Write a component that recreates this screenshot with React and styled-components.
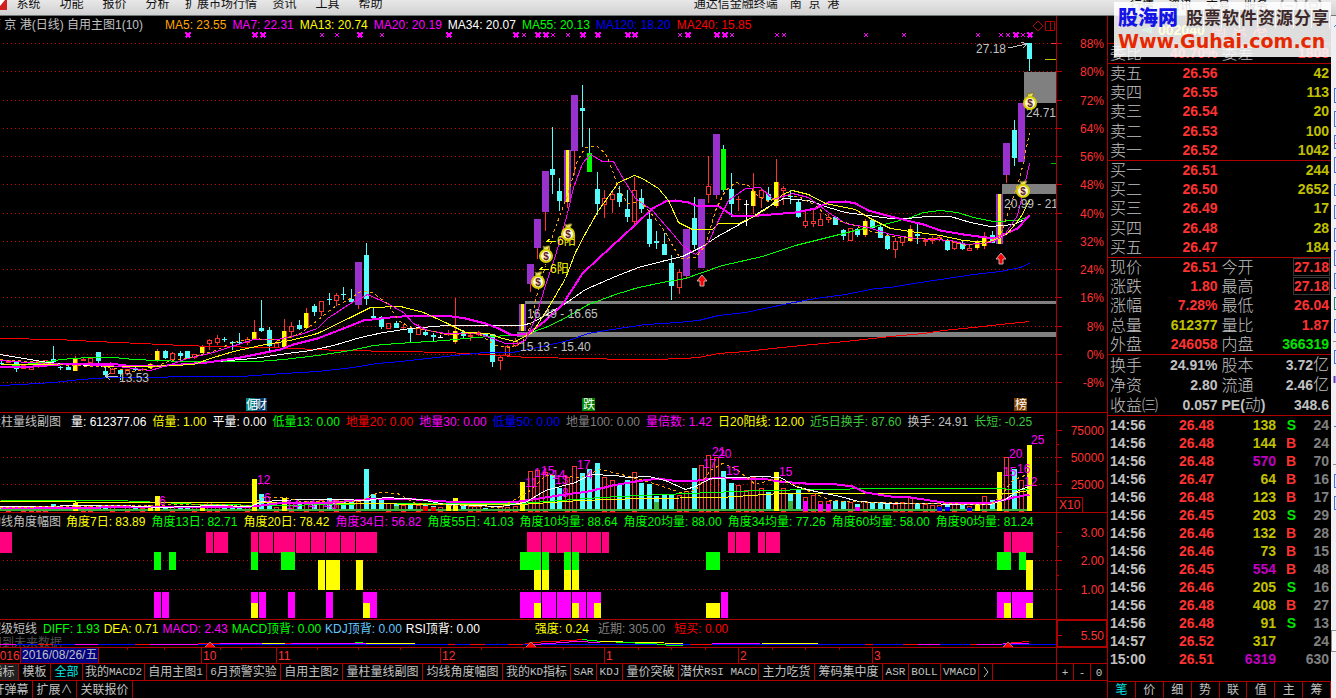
import React from "react"
import styled, { createGlobalStyle } from "styled-components"

const RED = "#b00000"
const CYAN = "#54fcfc"
const PURPLE = "#9932cc"
const PINK = "#ff007f"

/* ---------- data ---------- */

// index, kind, high, low, body top, body bottom
// kinds: r hollow red, c cyan, y yellow, p purple, q purple with yellow core, g green, w white
const candles = [
  [0, "c", 361, 365, 363, 364], [1, "r", 360, 363, 360, 363], [2, "c", 362, 372, 362, 369],
  [3, "r", 364, 369, 365, 369], [4, "r", 367, 370, 367, 370], [5, "r", 360, 368, 361, 367],
  [6, "r", 360, 365, 360, 365], [7, "c", 346, 362, 359, 362], [8, "c", 366, 370, 367, 368],
  [9, "c", 366, 370, 367, 370], [10, "y", 356, 371, 359, 371], [11, "r", 358, 361, 359, 361],
  [12, "r", 358, 363, 358, 363], [13, "c", 352, 363, 352, 361], [14, "c", 367, 378, 371, 375],
  [15, "r", 368, 374, 369, 374], [16, "c", 370, 380, 370, 374], [17, "r", 369, 374, 369, 374],
  [18, "c", 367, 371, 368, 370], [19, "r", 368, 371, 369, 370], [20, "y", 363, 368, 364, 368],
  [21, "y", 349, 362, 351, 361], [22, "c", 350, 359, 351, 358], [23, "r", 352, 360, 353, 360],
  [24, "c", 351, 360, 353, 356], [25, "c", 351, 358, 351, 358], [26, "r", 354, 359, 354, 358],
  [27, "y", 345, 353, 346, 353], [28, "r", 339, 350, 340, 344], [29, "r", 335, 345, 338, 343],
  [30, "c", 337, 342, 339, 340], [31, "c", 341, 350, 342, 343], [32, "c", 333, 344, 342, 343],
  [33, "r", 337, 345, 339, 343], [34, "y", 320, 339, 332, 339], [35, "c", 300, 332, 328, 331],
  [36, "c", 327, 353, 330, 346], [37, "r", 341, 348, 343, 348], [38, "y", 319, 347, 331, 347],
  [39, "r", 322, 338, 326, 332], [40, "c", 320, 330, 325, 329], [41, "y", 308, 329, 313, 328],
  [42, "c", 304, 316, 306, 312], [43, "r", 301, 316, 301, 312], [44, "c", 293, 305, 299, 300],
  [45, "r", 293, 306, 295, 301], [46, "c", 287, 300, 294, 295], [47, "c", 289, 303, 299, 302],
  [48, "p", 262, 309, 262, 305], [49, "c", 243, 305, 255, 299], [50, "c", 307, 318, 316, 318],
  [51, "c", 316, 329, 317, 327], [52, "r", 323, 329, 323, 329], [53, "c", 321, 328, 323, 328],
  [54, "r", 324, 330, 327, 328], [55, "c", 326, 342, 328, 333], [56, "r", 324, 335, 328, 335],
  [57, "c", 330, 336, 332, 335], [58, "c", 333, 341, 335, 337], [59, "w", 335, 338, 337, 338],
  [60, "r", 330, 336, 334, 335], [61, "y", 298, 344, 331, 342], [62, "c", 330, 338, 332, 336],
  [63, "r", 333, 341, 335, 337], [64, "r", 331, 336, 332, 335], [65, "c", 333, 337, 333, 336],
  [66, "c", 334, 367, 334, 362], [67, "r", 355, 370, 357, 361], [68, "r", 345, 357, 346, 356],
  [69, "r", 338, 347, 341, 346], [70, "q", 304, 331, 304, 331], [71, "p", 264, 292, 264, 284],
  [72, "p", 219, 259, 219, 248], [73, "p", 171, 231, 171, 212], [74, "c", 127, 194, 169, 175],
  [75, "c", 178, 211, 191, 201], [76, "q", 150, 208, 150, 202], [77, "p", 95, 175, 95, 151],
  [78, "c", 85, 147, 108, 111], [79, "g", 128, 172, 153, 172], [80, "c", 172, 215, 189, 204],
  [81, "r", 190, 218, 198, 205], [82, "r", 192, 213, 194, 200], [83, "c", 186, 207, 193, 202],
  [84, "c", 190, 222, 209, 217], [85, "r", 177, 224, 190, 222], [86, "c", 189, 213, 198, 209],
  [87, "c", 210, 247, 219, 244], [88, "c", 231, 249, 241, 243], [89, "c", 233, 255, 244, 255],
  [90, "c", 255, 300, 263, 286], [91, "r", 269, 294, 272, 288], [92, "p", 229, 279, 229, 276],
  [93, "c", 197, 249, 218, 245], [94, "p", 199, 268, 199, 268], [95, "r", 156, 203, 186, 195],
  [96, "p", 134, 199, 134, 195], [97, "g", 145, 192, 149, 190], [98, "c", 173, 217, 189, 204],
  [99, "r", 196, 211, 199, 200], [100, "w", 200, 226, 204, 205], [101, "y", 173, 214, 191, 206],
  [102, "r", 189, 208, 190, 198], [103, "c", 187, 202, 194, 200], [104, "y", 159, 208, 182, 206],
  [105, "r", 186, 205, 188, 191], [106, "c", 190, 204, 196, 197], [107, "c", 199, 218, 202, 217],
  [108, "r", 209, 228, 221, 226], [109, "r", 209, 227, 221, 224], [110, "r", 213, 226, 219, 226],
  [111, "r", 214, 223, 217, 220], [112, "c", 216, 225, 217, 225], [113, "c", 229, 240, 230, 236],
  [114, "r", 228, 241, 228, 241], [115, "c", 228, 237, 229, 235], [116, "y", 219, 237, 221, 235],
  [117, "c", 219, 229, 220, 228], [118, "c", 224, 238, 227, 238], [119, "c", 233, 250, 236, 249],
  [120, "r", 238, 258, 241, 250], [121, "r", 236, 246, 236, 243], [122, "y", 225, 242, 229, 241],
  [123, "c", 224, 244, 234, 236], [124, "r", 238, 246, 240, 242], [125, "r", 236, 244, 238, 241],
  [126, "r", 236, 241, 237, 240], [127, "c", 239, 251, 240, 250], [128, "r", 241, 250, 242, 249],
  [129, "c", 241, 250, 243, 249], [130, "r", 245, 251, 248, 251], [131, "y", 240, 250, 241, 248],
  [132, "y", 232, 249, 236, 246], [133, "c", 231, 243, 235, 243], [134, "q", 194, 244, 194, 244],
  [135, "p", 143, 183, 143, 175], [136, "c", 120, 166, 130, 158], [137, "p", 103, 162, 103, 162],
  [138, "c", 43, 71, 43, 59],
]

const averages = [
  { color: "#f00", width: 1, points: "0,338 57,339 95,341 140,343 183,345 213,346 267,347 317,349 340,350 400,351 445,352 488,354 527,357 588,358 625,359 653,359 683,358 698,357 718,353 745,351 772,348 812,344 845,341 890,336 923,333 943,330 973,327 1000,324 1029,321" },
  { color: "#00f", width: 1, points: "0,385 20,384 53,382 80,379 110,377 153,377 183,376 240,376 283,373 317,371 353,367 377,363 400,361 445,356 485,352 512,352 542,346 568,340 588,333 612,329 645,324 678,322 698,320 718,315 745,312 788,303 815,298 845,294 875,288 890,287 913,283 940,279 973,274 1000,271 1020,267 1029,263" },
  { color: "#0f0", width: 1, points: "0,367 23,364 43,362 60,359 87,357 113,357 133,359 183,361 257,361 283,359 317,355 350,350 373,345 397,343 445,340 465,338 488,336 512,335 525,334 545,327 562,319 588,304 615,294 638,287 662,282 685,278 702,272 722,265 762,256 795,245 835,235 855,230 888,223 910,217 923,212 940,210 957,212 973,217 993,221 1017,220 1029,216" },
  { color: "#fff", width: 1, points: "0,354 17,357 47,362 73,364 110,366 150,366 187,364 217,361 253,358 287,353 310,350 333,345 360,337 383,332 410,328 445,325 492,325 522,325 532,322 562,305 585,289 615,276 638,267 665,260 682,256 702,246 717,236 728,230 748,219 765,208 783,198 808,200 828,207 845,212 890,218 907,218 927,216 950,216 970,222 990,226 1013,224 1029,217" },
  { color: "#f0f", width: 2, points: "0,367 33,366 60,364 110,363 133,366 167,365 207,362 240,357 260,353 280,349 293,344 317,338 343,328 363,320 390,317 413,315 445,315 465,318 485,323 498,328 512,335 528,333 545,320 562,304 582,273 598,258 622,236 635,224 652,208 665,201 675,200 688,202 698,206 717,205 732,215 758,215 795,212 815,208 828,202 845,201 855,203 868,210 890,216 923,224 940,230 963,234 993,238 1003,234 1017,228 1029,215" },
  { color: "#ff0", width: 1, points: "0,364 40,364 80,364 110,366 150,366 193,364 213,357 233,351 260,345 290,340 317,333 350,317 370,307 400,306 423,312 445,322 465,332 488,333 502,338 515,341 532,332 548,307 565,278 575,252 585,233 598,210 618,182 634,175 642,178 658,188 668,200 678,222 692,229 712,229 718,223 738,223 752,217 768,207 782,194 792,190 808,194 825,203 855,209 868,217 890,228 910,231 940,235 963,240 987,242 1000,237 1007,233 1020,217 1029,200" },
  { color: "#f0f", width: 1, points: "0,360 27,362 67,364 110,365 133,368 150,370 167,365 187,358 213,352 253,339 277,339 300,334 317,328 327,318 350,303 367,294 387,303 403,312 413,323 427,330 445,333 478,333 492,338 505,343 517,343 525,340 535,318 545,285 555,255 567,213 573,187 582,163 590,154 602,161 613,161 625,182 635,198 652,210 672,233 682,245 695,254 708,242 718,220 728,200 745,188 760,187 773,199 792,193 808,197 828,212 845,223 868,227 890,234 915,238 950,240 967,244 990,242 1003,236 1017,215 1023,190 1029,163" },
  { color: "#ffa500", width: 1, dash: "3 3", points: "0,359 27,361 67,365 100,366 133,371 150,368 170,360 190,357 215,350 233,342 253,338 280,340 300,333 313,323 333,307 350,298 360,291 372,292 388,304 398,320 410,327 430,330 445,334 478,333 495,345 510,347 522,342 530,325 535,300 545,265 553,232 567,195 577,160 585,147 597,146 605,153 612,170 618,188 627,203 640,201 650,212 665,232 672,245 680,258 695,257 705,245 715,210 725,190 735,182 748,185 757,195 768,201 782,194 800,197 815,205 828,217 845,222 868,230 890,236 915,238 940,238 965,245 985,243 1000,235 1010,205 1020,175 1029,133" },
]

const crosses = [188, 255, 263, 360, 449, 516, 538, 546, 583, 598, 628, 635, 688, 717, 725, 1016, 1030]
const smallCrosses = [322, 337, 382, 524, 553, 568, 680, 732, 777, 784, 866, 904, 978, 1001, 1008, 1023]

const volumeTops = [
  507, 506, 508, 507, 508, 507, 507, 504, 506, 507, 503, 507, 506, 506, 507, 507, 509, 507, 507, 508,
  507, 496, 507, 506, 506, 507, 507, 507, 502, 506, 507, 507, 507, 507, 479, 494, 502, 507, 498, 502,
  503, 501, 502, 500, 498, 500, 501, 501, 501, 469, 494, 499, 503, 504, 505, 503, 505, 505, 506, 507,
  506, 498, 504, 506, 506, 508, 509, 507, 507, 506, 482, 471, 470, 472, 475, 488, 477, 466, 473, 469,
  463, 477, 480, 485, 480, 472, 483, 484, 496, 495, 494, 495, 491, 468, 465, 455, 457, 471, 483, 485,
  490, 477, 488, 492, 472, 488, 494, 490, 497, 495, 501, 501, 501, 501, 502, 504, 501, 503, 503, 503,
  504, 502, 497, 503, 504, 505, 505, 505, 504, 504, 506, 503, 496, 500, 472, 457, 469, 480, 445,
]
const volumeYellow = [10, 20, 21, 27, 34, 38, 60, 61, 70, 104, 131, 134, 138]
// coloured feet at the bottom of some volume bars: index, top, colour
const volumeFeet = [
  [53, 506, "#3cb43c"], [57, 506, "#f00"], [58, 507, "#f00"], [88, 502, "#3cb43c"], [106, 501, "#3cb43c"],
  [108, 501, "#f0f"], [110, 504, "#f0f"], [111, 504, "#f0f"], [115, 507, "#f0f"],
  [126, 507, "#00f"], [127, 507, "#00f"], [130, 508, "#00f"],
]
const volumeLines = [
  { color: "#0f0", width: 1, points: "0,500 117,500 160,502 200,504 280,505 380,503 520,503 600,497 640,495 760,490 880,488 980,488 1029,489" },
  { color: "#ff0", width: 1, points: "0,501 150,502 250,502 445,504 520,504 580,500 640,498 720,497 780,493 1010,493 1029,490" },
  { color: "#f0f", width: 2, points: "0,507 100,507 253,506 277,503 333,502 377,498 400,498 445,501 512,502 558,495 588,491 612,485 635,481 658,478 678,481 698,480 718,477 745,479 762,478 778,481 805,483 828,483 852,486 865,492 890,496 910,497 943,502 993,502 1013,497 1029,494" },
  { color: "#fff", width: 1, points: "0,506 120,505 160,507 215,505 250,506 262,501 300,499 340,499 367,500 385,497 420,499 445,504 500,506 525,502 545,490 575,482 590,474 615,475 628,477 648,476 665,480 685,489 695,486 710,478 740,477 760,476 780,477 795,486 815,491 840,496 858,501 890,503 990,504 1005,499 1018,490 1029,486" },
  { color: "#ffa500", width: 1, dash: "3 3", points: "0,507 200,504 250,505 262,497 285,497 300,501 360,501 370,495 380,492 397,493 415,503 500,507 530,490 545,475 580,477 600,469 625,475 650,482 680,492 695,490 710,470 722,463 735,468 755,484 775,478 800,487 830,500 870,502 990,504 1000,496 1012,480 1029,473" },
]
const volumeLabels = [
  [159, 501, "6"], [257, 480, "12"], [264, 498, "6"], [286, 505, "14"], [309, 505, "4"], [324, 505, "43"],
  [525, 483, "11"], [534, 473, "14"], [541, 471, "15"], [552, 475, "14"], [555, 480, "13"], [562, 493, "8"],
  [577, 465, "17"], [586, 475, "4"], [703, 464, "17"], [712, 452, "21"], [718, 454, "20"], [726, 471, "15"],
  [779, 472, "15"], [1003, 472, "15"], [1009, 454, "20"], [1017, 469, "16"], [1024, 482, "12"], [1031, 440, "25"],
]

// rows of blocks: top, bottom, colour, spans
const angleBlocks = [
  [532, 553, PINK, [[0, 12], [206, 213], [214, 228], [251, 258], [259, 273], [274, 295], [296, 310], [311, 325], [326, 340], [341, 355], [356, 377], [527, 541], [542, 556], [557, 571], [572, 586], [587, 601], [602, 609], [728, 735], [736, 750], [758, 765], [766, 780], [1004, 1011], [1012, 1033]]],
  [552, 570, "#0f0", [[154, 161], [169, 176], [251, 258], [281, 295], [520, 541], [542, 549], [564, 571], [572, 579], [706, 720], [997, 1011], [1019, 1026]]],
  [560, 590, "#ff0", [[318, 325], [326, 340], [356, 363], [1026, 1033]]],
  [570, 590, "#ff0", [[534, 541], [542, 549], [564, 571], [572, 579]]],
  [592, 618, "#f0f", [[154, 161], [162, 169], [251, 258], [259, 266], [288, 295], [326, 333], [363, 377], [520, 541], [542, 556], [557, 571], [572, 586], [587, 601], [721, 728], [997, 1011], [1012, 1033]]],
  [603, 618, "#ff0", [[251, 258], [363, 370], [534, 541], [572, 579], [594, 601], [706, 720], [1004, 1011], [1026, 1033]]],
]

const waveSegments = [
  ["#f0f", "0,644 16,644"], ["#f00", "38,644 53,644"], ["#f0f", "75,644 98,644"], ["#f00", "135,644 158,644"],
  ["#f0f", "150,644 198,644"], ["#f00", "198,643 222,643"], ["#f0f", "220,643 262,643"], ["#ff0", "262,643 285,643"],
  ["#f00", "285,643 291,643"], ["#f0f", "291,643 366,643"], ["#ff0", "366,643 415,643"], ["#0f0", "355,642 363,642"],
  ["#f00", "448,644 455,644"], ["#f00", "470,644 485,644"], ["#f00", "508,644 523,644"],
  ["#f00", "525,643 533,642 550,641 570,640 585,639"], ["#f0f", "533,644 550,643 575,641 600,642"],
  ["#0f0", "582,639 592,640 602,641"], ["#ff0", "600,641 645,642 683,643"], ["#0f0", "616,642 653,643 670,645 683,645"],
  ["#f00", "690,644 712,644"], ["#f0f", "712,643 760,643"], ["#ff0", "762,643 818,643"], ["#f00", "865,644 873,644"],
  ["#f00", "903,644 918,644"], ["#f0f", "918,644 940,644"], ["#f00", "970,644 977,644"], ["#f0f", "977,644 1029,643"],
  ["#f00", "1007,643 1015,642 1029,641"],
]

const mainReadings = [
  ["MA5: 23.55", "#ffa500"], ["MA7: 22.31", "#f0f"], ["MA13: 20.74", "#ff0"], ["MA20: 20.19", "#f0f"],
  ["MA34: 20.07", "#fff"], ["MA55: 20.13", "#0f0"], ["MA120: 18.20", "#00f"], ["MA240: 15.85", "#f00"],
]
const volumeReadings = [
  ["量: 612377.06", "#fff"], ["倍量: 1.00", "#ff0"], ["平量: 0.00", "#fff"], ["低量13: 0.00", "#0f0"],
  ["地量20: 0.00", "#f00"], ["地量30: 0.00", "#f0f"], ["低量50: 0.00", "#00f"], ["地量100: 0.00", "#808080"],
  ["量倍数: 1.42", "#f0f"], ["日20阳线: 12.00", "#ff0"], ["近5日换手: 87.60", "#3cc83c"],
  ["换手: 24.91", "#c0c0c0"], ["长短: -0.25", "#3cc83c"],
]
const angleReadings = [
  ["角度7日: 83.89", "#ff0"], ["角度13日: 82.71", "#0f0"], ["角度20日: 78.42", "#ff0"], ["角度34日: 56.82", "#f0f"],
  ["角度55日: 41.03", "#0f0"], ["角度10均量: 88.64", "#0f0"], ["角度20均量: 88.00", "#0f0"],
  ["角度34均量: 77.26", "#0f0"], ["角度60均量: 58.00", "#0f0"], ["角度90均量: 81.24", "#0f0"],
]
const shortReadings = [
  ["DIFF: 1.93", "#0f0"], ["DEA: 0.71", "#ff0"], ["MACD: 2.43", "#f0f"], ["MACD顶背: 0.00", "#0f0"],
  ["KDJ顶背: 0.00", "#64c8ff"], ["RSI顶背: 0.00", "#fff"],
]
const shortSignals = [["强度: 0.24", "#ff0"], ["近期: 305.00", "#808080"], ["短买: 0.00", "#f00"]]

const menus = ["系统", "功能", "报价", "分析", "扩展市场行情", "资讯", "工具", "帮助"]
const indicatorTabs = [
  "指标", "模板", "全部", "我的MACD2", "自用主图1", "6月预警实验", "自用主图2", "量柱量线副图", "均线角度幅图",
  "我的KD指标", "SAR", "KDJ", "量价突破", "潜伏RSI MACD", "主力吃货", "筹码集中度", "ASR", "BOLL", "VMACD",
]

const sells = [["卖五", "26.56", 42], ["卖四", "26.55", 113], ["卖三", "26.54", 20], ["卖二", "26.53", 100], ["卖一", "26.52", 1042]]
const buys = [["买一", "26.51", 244], ["买二", "26.50", 2652], ["买三", "26.49", 17], ["买四", "26.48", 28], ["买五", "26.47", 184]]
const UP = "#ff3232"
const AMOUNT = "#c0c000"
const PLAIN = "#c0c0c0"
const prices = [
  ["现价", "26.51", UP, "今开", "27.18", UP, true], ["涨跌", "1.80", UP, "最高", "27.18", UP, true],
  ["涨幅", "7.28%", UP, "最低", "26.04", UP], ["总量", "612377", AMOUNT, "量比", "1.87", UP],
  ["外盘", "246058", UP, "内盘", "366319", "#00e600"],
]
const ticks = [
  ["14:56", "26.48", 138, "S", 24], ["14:56", "26.48", 144, "B", 24], ["14:56", "26.48", 570, "B", 70],
  ["14:56", "26.47", 64, "B", 16], ["14:56", "26.48", 123, "B", 17], ["14:56", "26.45", 203, "S", 29],
  ["14:56", "26.46", 132, "B", 28], ["14:56", "26.46", 73, "B", 15], ["14:56", "26.45", 554, "B", 48],
  ["14:56", "26.46", 205, "S", 16], ["14:56", "26.48", 408, "B", 27], ["14:56", "26.48", 91, "S", 13],
  ["14:57", "26.52", 317, "", 24], ["15:00", "26.51", 6319, "", 630],
]

/* ---------- chart pieces ---------- */

const xOf = i => Math.floor(1.2 + 7.45 * i)

const kindColor = { r: "#ff3232", c: CYAN, y: "#ff3232", p: "#ff3232", q: "#ff3232", g: CYAN, w: "#fff" }

const Candle = ({ data }) => {
  const [i, kind, high, low, top, bottom] = data
  const x = xOf(i)
  const h = Math.max(bottom - top, 1)
  const color = kindColor[kind]
  return (
    <g>
      {kind === "r" ? (
        <>
          <rect x={x} y={high} width="1" height={Math.max(top - high, 0)} fill={color} />
          <rect x={x} y={bottom} width="1" height={Math.max(low - bottom, 0)} fill={color} />
          {h < 3 ? (
            <rect x={x - 2} y={top} width="5" height={h} fill={color} />
          ) : (
            <rect x={x - 1.5} y={top + 0.5} width="4" height={h - 1} fill="none" stroke={color} />
          )}
        </>
      ) : (
        <rect x={x} y={high} width="1" height={low - high} fill={color} />
      )}
      {(kind === "c" || kind === "w") && <rect x={x - 2} y={top} width="5" height={h} fill={color} />}
      {kind === "g" && <rect x={x - 2} y={top} width="5" height={h} fill="#0f0" />}
      {kind === "y" && <rect x={x - 2} y={top} width="5" height={h} fill="#ff3232" />}
      {kind === "y" && <rect x={x - 2} y={top} width="4" height={h} fill="#ff0" />}
      {(kind === "p" || kind === "q") && <rect x={x - 3} y={top} width="7" height={h} fill={PURPLE} />}
      {kind === "q" && <rect x={x - 1} y={top} width="3" height={h} fill="#ff0" />}
    </g>
  )
}

const Grid = ({ rows }) => rows.map(y => (
  <line key={y} x1="3" x2="1056" y1={y + 0.5} y2={y + 0.5} stroke="#d00000" strokeDasharray="1 3" />
))

const Lines = ({ items }) => items.map((l, i) => (
  <polyline key={i} points={l.points} fill="none" stroke={l.color} strokeWidth={l.width} strokeDasharray={l.dash} transform="translate(0.5 0.5)" />
))

const Cross = ({ x, size }) => (
  <path d={`M${x - size} ${35 - size}L${x + size} ${35 + size}M${x + size} ${35 - size}L${x - size} ${35 + size}`} stroke="#f0f" strokeWidth={size > 2 ? 2 : 1} />
)

const MoneyBag = ({ x, y }) => (
  <g transform={`translate(${x} ${y})`} shapeRendering="auto">
    <path d="M-3 -9L-1 -8L1 -9L4 -9L2 -5L-2 -5Z" fill="#e8e060" stroke="#807820" />
    <circle cx="0" cy="1" r="6" fill="#fff8dc" stroke="#d8d000" strokeWidth="2" />
    <text x="0" y="5" textAnchor="middle" fontSize="10" fontWeight="bold" fill="#602020">$</text>
  </g>
)

const BuyArrow = ({ x, y }) => (
  <path d={`M${x} ${y - 6}L${x + 5} ${y}L${x + 2} ${y}L${x + 2} ${y + 5}L${x - 2} ${y + 5}L${x - 2} ${y}L${x - 5} ${y}Z`} fill="#f00" stroke="#c0b0b0" shapeRendering="auto" />
)

const Axis = ({ top, height, labels, minor = [], children }) => (
  <AxisBox>
    <Drawing viewBox={`1057 ${top} 50 ${height}`} height={height} width="50">
      {labels.map(([y, text]) => (
        <g key={text}>
          <rect x="1057" y={y} width="5" height="1" fill="#c00000" />
          <text x="1104" y={y + 5} textAnchor="end" fill="#ff3232">{text}</text>
        </g>
      ))}
      {minor.map(y => <rect key={y} x="1057" y={y} width="2" height="1" fill="#c00000" />)}
      {children}
    </Drawing>
  </AxisBox>
)

const Readings = ({ title, width, items, tight, children }) => (
  <ReadingRow $tight={tight}>
    <ReadingTitle $width={width}>{title}</ReadingTitle>
    {items.map(([text, color]) => <Reading key={text} $color={color}>{text}</Reading>)}
    {children}
  </ReadingRow>
)

const MainChart = () => (
  <Panel>
    <Plot>
      <Readings title="南 京 港(日线) 自用主图1(10)" width={170} items={mainReadings}>
        <HeaderIcons width="24" height="12" viewBox="0 0 24 12" fill="none" stroke="#b00000" aria-hidden="true">
          <path d="M6 1L11 6L6 11L1 6Z" />
          <path d="M13.500 1.500H22.500V10.500H13.500ZM18.500 1.500V10.500" />
        </HeaderIcons>
      </Readings>
      <Drawing viewBox="0 32 1056 380" height="380" preserveAspectRatio="none">
        <Grid rows={[43, 71, 100, 128, 156, 184, 213, 241, 269, 297, 326, 354, 382]} />
        {crosses.map(x => <Cross key={x} x={x} size={2.5} />)}
        {smallCrosses.map(x => <Cross key={x} x={x} size={2} />)}
        <g fill="#808080">
          <rect x="525" y="301" width="531" height="3" />
          <rect x="517" y="332" width="539" height="5" />
          <rect x="1002" y="184" width="54" height="10" />
          <rect x="1024" y="72" width="32" height="31" />
        </g>
        {candles.map(c => <Candle key={c[0]} data={c} />)}
        <Lines items={averages} />
        <rect x="1051" y="43" width="5" height="1" fill="#ff3232" />
        <rect x="1045" y="59" width="11" height="1" fill="#c0c000" />
        <rect x="1051" y="163" width="5" height="1" fill="#00c000" />
        <g fill="#c0c0c0">
          <text x="976" y="53">27.18</text>
          <text x="1026" y="117">24.71</text>
          <text x="1004" y="208">20.99 - 21</text>
          <text x="527" y="318">16.49 - 16.65</text>
          <text x="520" y="351">15.13 - 15.40</text>
          <text x="119" y="382">13.53</text>
        </g>
        <path d="M1008 48L1027 44M1021 42L1027 44L1023 48M106 376.500H118M106 376.500L110 373M106 376.500L110 380" stroke="#c0c0c0" fill="none" />
        <g fill="#ff0">
          <text x="557" y="245">6阳</text>
          <text x="550" y="273">6阳</text>
        </g>
        <path d="M546 241.500H556M546 241.500L550 239M539 269.500H549M539 269.500L543 267" stroke="#ff0" fill="none" />
        <MoneyBag x={538} y={281} />
        <MoneyBag x={546} y={255} />
        <MoneyBag x={568} y={233} />
        <MoneyBag x={1030} y={102} />
        <MoneyBag x={1023} y={190} />
        <BuyArrow x={702} y={281} />
        <BuyArrow x={1001} y={259} />
        <rect x="246" y="398" width="9" height="13" fill="#008080" />
        <rect x="255" y="398" width="12" height="13" fill="#003c6e" />
        <rect x="582" y="398" width="13" height="13" fill="#008000" />
        <rect x="1014" y="398" width="13" height="13" fill="#804000" />
        <g fill="#fff">
          <text x="246" y="409">倨</text>
          <text x="255" y="409">财</text>
          <text x="583" y="409">跌</text>
          <text x="1015" y="409">榜</text>
        </g>
      </Drawing>
    </Plot>
    <Axis
      top={16}
      height={396}
      labels={[[43, "88%"], [71, "80%"], [100, "72%"], [128, "64%"], [156, "56%"], [184, "48%"], [213, "40%"], [241, "32%"], [269, "24%"], [297, "16%"], [326, "8%"], [354, "0%"], [382, "-8%"]]}
    />
  </Panel>
)

const VolumeBar = ({ i, top }) => {
  const x = xOf(i)
  const kind = candles[i][1]
  if (volumeYellow.includes(i)) return <rect x={x - 2} y={top} width="5" height={511 - top} fill="#ff0" />
  if (kind === "c" || kind === "g") return <rect x={x - 2} y={top} width="5" height={511 - top} fill={CYAN} />
  return <rect x={x - 1.5} y={top + 0.5} width="4" height={511 - top} fill="#000" stroke="#ff3232" />
}

const VolumeChart = () => (
  <Panel>
    <Plot>
      <Readings title="量柱量线副图" width={76} items={volumeReadings} />
      <Drawing viewBox="0 429 1056 83" height="83" preserveAspectRatio="none">
        <Grid rows={[457, 484]} />
        {volumeTops.map((top, i) => <VolumeBar key={i} i={i} top={top} />)}
        <rect x="0" y="509" width="1030" height="2" fill="#3cb43c" />
        {volumeYellow.map(i => <rect key={i} x={xOf(i) - 2} y="505" width="5" height="6" fill="#ff0" />)}
        {volumeFeet.map(([i, top, color]) => <rect key={i} x={xOf(i) - 2} y={top} width="5" height={511 - top} fill={color} />)}
        <Lines items={volumeLines} />
        <g fill="#f0f">
          {volumeLabels.map(([x, y, text], i) => <text key={i} x={x} y={y + 4}>{text}</text>)}
        </g>
      </Drawing>
    </Plot>
    <Axis top={413} height={99} labels={[[430, "75000"], [457, "50000"], [484, "25000"]]} minor={[444, 471]}>
      <path d="M1057 497.500H1082.500V512" fill="none" stroke={RED} />
      <text x="1059" y="509" fill="#ff3232">X10</text>
    </Axis>
  </Panel>
)

const AngleChart = () => (
  <Panel>
    <Plot>
      <Readings title="均线角度幅图" width={71} items={angleReadings} />
      <Drawing viewBox="0 529 1056 90" height="90" preserveAspectRatio="none">
        <Grid rows={[560, 589]} />
        {angleBlocks.map(([top, bottom, color, spans]) => spans.map(([from, to]) => (
          <rect key={`${top}-${bottom}-${from}`} x={from} y={top} width={to - from} height={bottom - top} fill={color} />
        )))}
      </Drawing>
    </Plot>
    <Axis top={513} height={106} labels={[[532, "3.00"], [560, "2.00"], [589, "1.00"]]} minor={[546, 575]} />
  </Panel>
)

const ShortChart = () => (
  <Panel>
    <Plot>
      <Readings title="超级短线" width={50} items={shortReadings} tight>
        <Signals>
          {shortSignals.map(([text, color]) => <Reading key={text} $color={color}>{text}</Reading>)}
        </Signals>
      </Readings>
      <Drawing viewBox="0 636 1056 11" height="11" preserveAspectRatio="none">
        <text x="-10" y="647" fill="#505050">用到未来数据</text>
        <rect x="0" y="644" width="1056" height="1" fill="#00f" />
        {waveSegments.map(([color, points], i) => (
          <polyline key={i} points={points} fill="none" stroke={color} transform="translate(0 0.5)" />
        ))}
        {[210, 531, 1008].map(x => <path key={x} d={`M${x} 642L${x + 5} 647H${x - 5}Z`} fill="#f00" stroke="#a08080" />)}
      </Drawing>
    </Plot>
    <Axis top={620} height={27} labels={[[635, "5.50"]]}>
      <rect x="1057.500" y="620.500" width="49" height="26" fill="none" stroke={RED} />
    </Axis>
  </Panel>
)

const TimeLine = () => (
  <Panel>
    <Plot>
      <Drawing viewBox="0 648 1056 15" height="15" preserveAspectRatio="none">
        <text x="-7" y="660" fill="#ff3232">2016</text>
        <rect x="20.500" y="647.500" width="78" height="16" fill="#000080" stroke={RED} />
        <text x="22" y="659" fill="#c0c0c0">2016/08/26/五</text>
        {[[201, "10"], [276, "11"], [440, "12"], [604, "1"], [738, "2"], [872, "3"]].map(([x, text]) => (
          <g key={text}>
            <rect x={x} y="648" width="1" height="15" fill={RED} />
            <text x={x + 2} y="660" fill="#ff3232">{text}</text>
          </g>
        ))}
        {[127, 164, 220, 241, 317, 358, 400, 481, 523, 563, 638, 671, 705, 772, 805, 839].map(x => (
          <rect key={x} x={x} y="648" width="1" height="2" fill={RED} />
        ))}
      </Drawing>
    </Plot>
    <AxisBox />
  </Panel>
)

/* ---------- tabs ---------- */

// a Chinese character takes two cells, a latin one takes a single cell
const cellsOf = text => [...text].reduce((n, ch) => n + (ch.charCodeAt(0) > 255 ? 2 : 1), 0)

const TabText = ({ text }) => text.split(/([\x20-\x7e]+)/).filter(Boolean).map((part, i) => (
  part.charCodeAt(0) < 127 ? <Latin key={i}>{part}</Latin> : <React.Fragment key={i}>{part}</React.Fragment>
))

const IndicatorTabs = () => (
  <TabRow>
    {indicatorTabs.map((text, i) => (
      <Tab key={text} type="button" $cells={cellsOf(text)} $active={text === "全部"} $raised={i === 0}>
        <TabText text={text} />
      </Tab>
    ))}
    <Tab type="button" $cells={1} aria-label="更多">
      <svg width="6" height="10" viewBox="0 0 6 10" fill="none" stroke="#c0c0c0"><path d="M1 0L5 5L1 10" /></svg>
    </Tab>
    <ZoomButtons>
      {["+", "-", "0"].map(text => <ZoomButton key={text} type="button"><Latin>{text}</Latin></ZoomButton>)}
    </ZoomButtons>
  </TabRow>
)

/* ---------- quote panel ---------- */

const OrderTable = ({ rows }) => (
  <QuoteTable>
    <tbody>
      {rows.map(([label, price, amount]) => (
        <tr key={label}>
          <Label scope="row">{label}</Label>
          <Value $color={UP}>{price}</Value>
          <Label as="td" />
          <Value $color={AMOUNT}>{amount}</Value>
        </tr>
      ))}
    </tbody>
  </QuoteTable>
)

const Quote = () => (
  <QuotePanel>
    <StockHead>
      <svg width="12" height="8" viewBox="0 0 12 8" aria-hidden="true"><path d="M0 4L12 0V8Z" fill="#008040" /></svg>
      <StockCode>002040</StockCode>
      <StockName>南 京 港</StockName>
    </StockHead>
    <QuoteTable $flush>
      <tbody>
        <tr>
          <Label scope="row">委比</Label>
          <Value $color={UP}>40.70%</Value>
          <Label scope="row">委差</Label>
          <Value $color={UP}>1808</Value>
        </tr>
      </tbody>
    </QuoteTable>
    <OrderTable rows={sells} />
    <OrderTable rows={buys} />
    <QuoteTable>
      <tbody>
        {prices.map(([a, av, ac, b, bv, bc, boxed]) => (
          <tr key={a}>
            <Label scope="row">{a}</Label>
            <Value $color={ac}>{av}</Value>
            <Label scope="row">{b}</Label>
            <Value $color={bc}>{boxed ? <Boxed>{bv}</Boxed> : bv}</Value>
          </tr>
        ))}
      </tbody>
    </QuoteTable>
    <QuoteTable $last>
      <tbody>
        <tr>
          <Label scope="row">换手</Label>
          <Value $color={PLAIN}>24.91%</Value>
          <Label scope="row">股本</Label>
          <Value $color={PLAIN}>3.72<Unit>亿</Unit></Value>
        </tr>
        <tr>
          <Label scope="row">净资</Label>
          <Value $color={PLAIN}>2.80</Value>
          <Label scope="row">流通</Label>
          <Value $color={PLAIN}>2.46<Unit>亿</Unit></Value>
        </tr>
        <tr>
          <Label scope="row">收益㈢</Label>
          <Value $color={PLAIN}>0.057</Value>
          <Label scope="row"><Strong>PE(</Strong>动<Strong>)</Strong></Label>
          <Value $color={PLAIN}>348.6</Value>
        </tr>
      </tbody>
    </QuoteTable>
    <TickTable>
      <tbody>
        {ticks.map(([time, price, amount, side, count], i) => (
          <tr key={i}>
            <Tick $color={PLAIN} $left>{time}</Tick>
            <Tick $color={UP}>{price}</Tick>
            <Tick $color={amount > 500 ? "#c000c0" : AMOUNT}>{amount}</Tick>
            <Tick $color={side === "S" ? "#00e600" : UP}>{side}</Tick>
            <Tick $color="#808080">{count}</Tick>
          </tr>
        ))}
      </tbody>
    </TickTable>
    <QuoteTabs>
      {[..."笔价细势联值主筹"].map(text => <QuoteTab key={text} type="button" $active={text === "笔"}>{text}</QuoteTab>)}
    </QuoteTabs>
  </QuotePanel>
)

const EdgeStrip = () => (
  <Edge>
    <EdgeDrawing width="5" height="682" viewBox="0 16 5 682" fill="none" stroke="#3c78dc" aria-hidden="true">
      {[[88, 14], [111, 15], [135, 13], [157, 15], [184, 11], [205, 13], [228, 13], [250, 15], [273, 15], [319, 13], [350, 13], [474, 13], [496, 13]].map(([y, h]) => (
        <rect key={y} x="3.500" y={y + 0.5} width="6" height={h} />
      ))}
      <rect x="3.500" y="297.500" width="6" height="12" stroke="#208080" />
      <path d="M2 341.500H5M2 464.500H5" stroke="#909090" />
      <path d="M4 143.500H5" stroke="#f00" />
      <path d="M3.500 376V383" stroke="#6040c0" strokeWidth="2" />
      <path d="M3 27L5 25M3 426.500H5" />
      <rect x="0.500" y="630.500" width="8" height="21" fill="#f8f8f8" stroke="#909090" />
    </EdgeDrawing>
  </Edge>
)

const App = () => {
  return (
    <Page>
      <GlobalStyle />
      <MenuBar>
        <Logo width="7" height="10" viewBox="0 0 7 10" aria-hidden="true">
          <rect width="7" height="10" fill="#d02020" />
          <path d="M0 6L5 0H0Z" fill="#fff" />
        </Logo>
        {menus.map(text => <MenuButton key={text} type="button" $wide={text.length > 2}>{text}</MenuButton>)}
        <WindowTitle>
          <span>通达信金融终端</span>
          <span>南  京  港</span>
        </WindowTitle>
        <SideMenu>
          {["行情", "资讯", "交易", "服务"].map(text => <SideButton key={text} type="button">{text}</SideButton>)}
          <svg width="56" height="14" viewBox="0 0 56 14" fill="none" stroke="#909090" strokeWidth="2" aria-hidden="true">
            <circle cx="14" cy="5" r="8" />
            <circle cx="38" cy="5" r="8" />
            <path d="M10 6H18M35 3H42V8H35Z" />
          </svg>
        </SideMenu>
      </MenuBar>
      <Body>
        <Charts>
          <MainChart />
          <VolumeChart />
          <AngleChart />
          <ShortChart />
          <TimeLine />
          <IndicatorTabs />
          <BottomRow>
            <Tab type="button" $cells={6}>开弹幕</Tab>
            <Tab type="button" $cells={6}>扩展∧</Tab>
            <Tab type="button" $cells={8}>关联报价</Tab>
          </BottomRow>
        </Charts>
        <Quote />
        <EdgeStrip />
      </Body>
      <Watermark>
        <WatermarkTop>
          <SiteName>股海网</SiteName>
          <Slogan>
            {[..."股票软件资源分享"].map(ch => <SloganCell key={ch}>{ch}</SloganCell>)}
          </Slogan>
        </WatermarkTop>
        <SiteAddress>Www.Guhai.com.cn</SiteAddress>
      </Watermark>
    </Page>
  )
}
export default App

const GlobalStyle = createGlobalStyle`
  *{
    box-sizing:border-box;
  }
  body{
    margin:0;
    background:#000;
    font-family:"Liberation Sans", "Noto Sans CJK SC", sans-serif;
    font-size:12px;
    line-height:16px;
  }
  button{
    margin:0;
    padding:0;
    border:0;
    background:none;
    font:inherit;
    white-space:nowrap;
  }
  table{
    border-collapse:collapse;
    table-layout:fixed;
    width:100%;
  }
`
const Page = styled.div`
  position:relative;
  display:flex;
  flex-flow:column;
  min-height:100vh;
  overflow:hidden;
  background:#000;
`
const MenuBar = styled.header`
  display:flex;
  align-items:flex-start;
  height:16px;
  padding-right:5px;
  overflow:hidden;
  background:linear-gradient(#e8e8e8, #d0d0d0);
  border-bottom:1px solid #707878;
  color:#101010;
`
const Logo = styled.svg`
  flex:none;
`
const MenuButton = styled.button`
  flex:none;
  width:${props => (props.$wide ? 84 : 43)}px;
  margin-top:-4px;
  color:#101010;
`
const WindowTitle = styled.div`
  display:flex;
  flex:1;
  justify-content:center;
  gap:12px;
  margin-top:-4px;
  padding-left:18px;
  white-space:pre;
`
const SideMenu = styled.div`
  display:flex;
  flex:none;
`
const SideButton = styled.button`
  width:38px;
  margin-top:-2px;
  color:#101010;
`
const Body = styled.div`
  display:grid;
  grid-template-columns:minmax(0, 1fr) 223px 5px;
  flex:1;
`
const Charts = styled.main`
  display:flex;
  flex-flow:column;
  min-width:0;
`
const Panel = styled.section`
  display:grid;
  grid-template-columns:minmax(0, 1fr) 52px;
  border-bottom:1px solid ${RED};
`
const Plot = styled.div`
  min-width:0;
  overflow:hidden;
`
const AxisBox = styled.div`
  border-left:1px solid ${RED};
  border-right:1px solid ${RED};
`
const Drawing = styled.svg`
  display:block;
  width:100%;
  shape-rendering:crispEdges;
  font-family:"Liberation Sans", "Noto Sans CJK SC", sans-serif;
  font-size:12px;
`
const ReadingRow = styled.div`
  display:flex;
  gap:${props => (props.$tight ? 4 : 6)}px;
  height:16px;
  margin-left:-11px;
  line-height:18px;
  white-space:nowrap;
`
const ReadingTitle = styled.span`
  flex:none;
  width:${props => props.$width}px;
  color:#c0c0c0;
`
const Reading = styled.span`
  color:${props => props.$color};
`
const HeaderIcons = styled.svg`
  margin:4px 0 0 auto;
`
const Signals = styled.div`
  display:flex;
  gap:9px;
  margin-left:51px;
`
const TabRow = styled.nav`
  display:flex;
  height:17px;
  margin-left:-13px;
  border-bottom:1px solid ${RED};
  border-right:1px solid ${RED};
`
const BottomRow = styled.nav`
  display:flex;
  height:17px;
  margin-left:-11px;
  border-right:1px solid ${RED};
`
const Tab = styled.button`
  display:flex;
  flex:none;
  align-items:center;
  justify-content:center;
  width:${props => props.$cells * 6 + 8}px;
  border-right:1px solid ${RED};
  background:${props => (props.$raised ? "#202020" : "none")};
  color:${props => (props.$active ? "#00e6e6" : "#c0c0c0")};
`
const Latin = styled.span`
  font-family:"Liberation Mono", monospace;
  font-size:11px;
  white-space:pre;
`
const ZoomButtons = styled.div`
  display:flex;
  width:51px;
  margin-left:auto;
  border-left:1px solid ${RED};
`
const ZoomButton = styled.button`
  flex:1;
  color:#c0c0c0;

  & + &{
    border-left:1px solid ${RED};
  }
`
const QuotePanel = styled.aside`
  display:flex;
  flex-flow:column;
  min-width:0;
  color:#c0c0c0;
`
const StockHead = styled.div`
  display:flex;
  align-items:center;
  gap:6px;
  height:28px;
  padding-left:32px;
  border-bottom:1px solid ${RED};
`
const StockCode = styled.span`
  color:#ff0;
  font-size:14px;
  font-weight:bold;
`
const StockName = styled.span`
  color:#ff3232;
  font-size:16px;
`
const QuoteTable = styled.table`
  flex:none;
  height:${props => (props.$flush ? 20 : props.$last ? 59 : 97)}px;
  border-bottom:1px solid ${RED};

  tr{
    height:19px;
  }
`
const Label = styled.th`
  width:48px;
  padding:0 0 0 2px;
  color:#c0c0c0;
  font-size:16px;
  font-weight:300;
  line-height:19px;
  text-align:left;
  white-space:nowrap;
`
const Value = styled.td`
  padding:0 2px 0 0;
  color:${props => props.$color};
  font-size:14px;
  font-weight:bold;
  line-height:19px;
  text-align:right;
  white-space:nowrap;
`
const Boxed = styled.span`
  outline:1px solid #383838;
`
const Unit = styled.span`
  font-size:16px;
  font-weight:300;
`
const Strong = styled.span`
  font-size:14px;
  font-weight:bold;
`
const TickTable = styled.table`
  flex:none;

  tr{
    height:18px;
  }
`
const Tick = styled.td`
  padding:0 2px;
  color:${props => props.$color};
  font-size:14px;
  font-weight:bold;
  line-height:18px;
  text-align:${props => (props.$left ? "left" : "right")};

  &:nth-child(1){
    width:48px;
  }
  &:nth-child(2){
    width:60px;
  }
  &:nth-child(3){
    width:62px;
  }
  &:nth-child(4){
    width:20px;
  }
`
const QuoteTabs = styled.nav`
  display:flex;
  height:17px;
  margin-top:auto;
  border-top:1px solid ${RED};
`
const QuoteTab = styled.button`
  flex:1;
  border-right:1px solid ${RED};
  color:${props => (props.$active ? "#00e6e6" : "#c0c0c0")};
`
const Edge = styled.div`
  overflow:hidden;
  background:#f0f0f4;
`
const EdgeDrawing = styled.svg`
  display:block;
`
const Watermark = styled.div`
  position:absolute;
  top:2px;
  right:5px;
  width:217px;
  height:55px;
  padding:6px 0 0 4px;
  overflow:hidden;
  background:rgba(255, 255, 255, .87);
`
const WatermarkTop = styled.div`
  display:flex;
  align-items:center;
  gap:8px;
  height:21px;
`
const SiteName = styled.span`
  color:#1414e6;
  font-size:20px;
  font-weight:900;
  line-height:21px;
`
const Slogan = styled.span`
  display:flex;
`
const SloganCell = styled.span`
  width:18px;
  height:18px;
  background:#dcdcdc;
  border-right:1px solid #f8f8f8;
  color:#3c2828;
  font-size:17px;
  font-weight:bold;
  line-height:17px;
  text-align:center;
`
const SiteAddress = styled.div`
  color:#e62800;
  font-family:"DejaVu Sans", sans-serif;
  font-size:19px;
  font-weight:bold;
  line-height:24px;
`
